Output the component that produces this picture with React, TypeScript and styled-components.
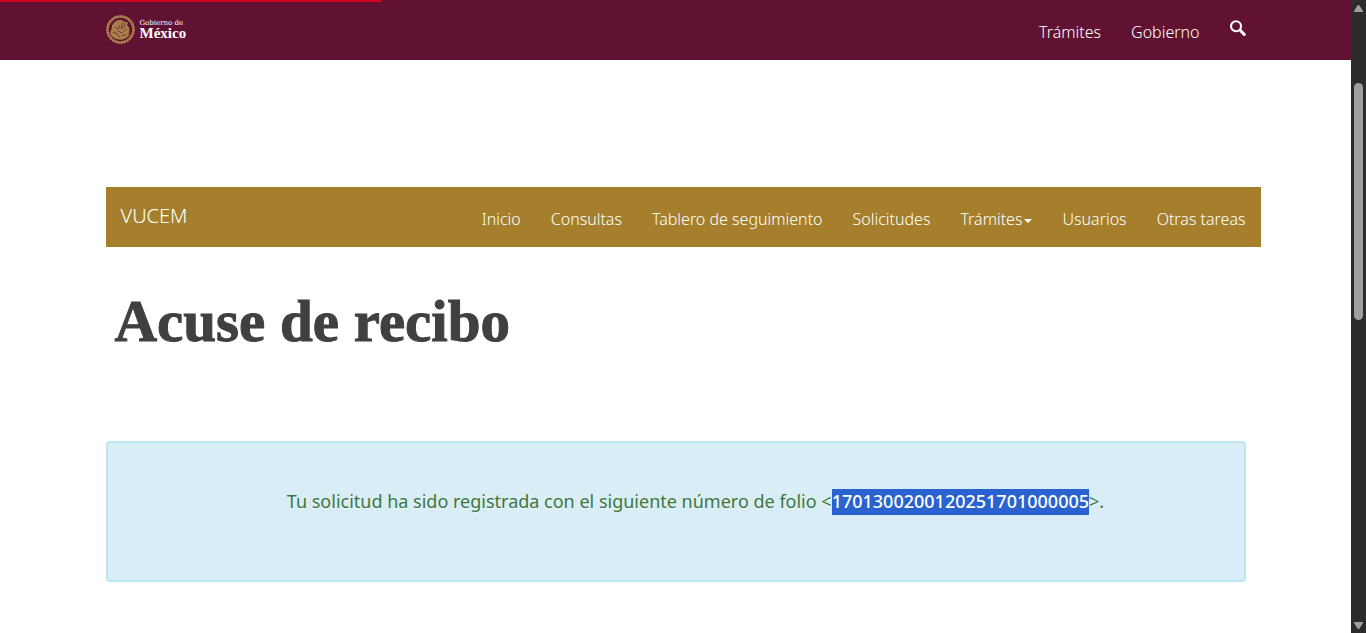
import React from 'react';
import styled, { createGlobalStyle } from 'styled-components';

const GlobalStyle = createGlobalStyle`
  *, *::before, *::after { box-sizing: border-box; }
  body {
    margin: 0;
    background: #fff;
    color: #404041;
    font-family: "Noto Sans", "Open Sans", sans-serif;
    font-size: 18px;
    line-height: 26px;
  }
`;

const Shell = styled.div`
  display: grid;
  grid-template-columns: minmax(0, 1fr) 15px;
  height: 100vh;
  overflow: hidden;
`;

const Page = styled.div`
  overflow: hidden;
`;

const Container = styled.div`
  width: 100%;
  max-width: 1170px;
  margin: 0 auto;
  padding: 0 15px;
`;

const TopBar = styled.header`
  position: relative;
  background: #611232;
`;

const LoadingBar = styled.div`
  position: absolute;
  top: 0;
  left: 0;
  width: 28.3%;
  height: 2px;
  background: #d0021b;
`;

const TopBarInner = styled(Container)`
  display: flex;
  justify-content: space-between;
  height: 60px;
`;

const Brand = styled.a`
  display: flex;
  align-items: center;
  gap: 5px;
  color: #fff;
  text-decoration: none;
`;

const BrandText = styled.span`
  display: flex;
  flex-direction: column;
  padding-bottom: 1px;
  font-family: "Liberation Serif", serif;
  font-weight: 700;
`;

const BrandSmall = styled.span`
  font-family: "DejaVu Serif", serif;
  font-weight: 400;
  font-size: 7px;
  line-height: 7px;
`;

const BrandLarge = styled.span`
  font-size: 15px;
  line-height: 13px;
`;

const TopNav = styled.nav`
  display: flex;
  gap: 30px;
  padding-top: 4px;
`;

const NavLink = styled.a`
  display: flex;
  align-items: center;
  color: #fff;
  font-size: 16px;
  font-weight: 300;
  line-height: 24px;
  text-decoration: none;
  white-space: nowrap;
`;

const SearchButton = styled.button`
  display: flex;
  align-items: center;
  padding: 0 0 9px;
  border: 0;
  background: none;
  color: #fff;
  cursor: pointer;
`;

const SectionBar = styled.nav`
  display: flex;
  justify-content: space-between;
  height: 60px;
  margin: 127px -15px 0 0;
  padding: 0 15px;
  background: #a57f2c;
`;

const SectionTitle = styled.a`
  align-self: center;
  padding-bottom: 2px;
  color: #fff;
  font-size: 20px;
  font-weight: 300;
  line-height: 28px;
  text-decoration: none;
`;

const SectionLinks = styled.div`
  display: flex;
  gap: 30px;
  padding-top: 4px;
`;

const Caret = styled.span`
  margin: 4px 0 0 2px;
  border-top: 4px solid #fff;
  border-left: 4px solid transparent;
  border-right: 4px solid transparent;
`;

const Heading = styled.h1`
  margin: 41px 0 87px;
  padding-left: 9px;
  font-family: "Liberation Serif", serif;
  font-size: 59px;
  font-weight: 700;
  line-height: 66px;
  -webkit-text-stroke: 1px currentColor;
`;

const Alert = styled.div`
  padding: 45px 35px 66px 75px;
  border: 2px solid #bce8f1;
  border-radius: 4px;
  background: #d9edf7;
  color: #3c763d;
  text-align: center;
  text-shadow: 0 1px 0 rgba(255, 255, 255, 0.5);
`;

const Message = styled.p`
  margin: 0;
`;

const Folio = styled.mark`
  padding: 0 0 2px;
  background: #2a63d0;
  color: #fff;
  font-weight: 500;
  text-shadow: none;
`;

const ScrollTrack = styled.div`
  display: flex;
  flex-direction: column;
  align-items: center;
  padding: 5px 0 4px;
  background: #2c2c2c;
`;

const ScrollThumb = styled.div`
  flex: 0 0 38%;
  width: 9px;
  margin: 71px 0 auto;
  border-radius: 5px;
  background: #9f9f9f;
`;

const Seal = () => (
  <svg width="29" height="30" viewBox="0 0 58 60" fill="none" aria-hidden="true">
    <circle cx="29" cy="29" r="26" stroke="#8d5b41" strokeWidth="5" />
    <circle cx="29" cy="29" r="26" stroke="#b08650" strokeWidth="5" strokeDasharray="4 2" />
    <path
      d="M12 21c4-8 11-12 19-11l5 3 8 2-2 5 5 6-1 10-5 8-10 5-11-1-9-6-3-8 3-5z"
      fill="#a97e4b"
    />
    <path
      d="M17 24l8 4 3-8m6-5l-4 12 8-5m-15 9l9 5 9-9M14 35l8 2 5 8m13-5l-8 1M38 17l-2 6"
      stroke="#74403a"
      strokeWidth="2"
    />
    <path d="M11 37c6 13 29 15 36 0" stroke="#b08650" strokeWidth="3" strokeDasharray="5 1" />
  </svg>
);

const SearchIcon = () => (
  <svg width="16" height="16" viewBox="0 0 16 16" fill="none" stroke="#fff" aria-hidden="true">
    <circle cx="6" cy="6.3" r="5" strokeWidth="2.1" />
    <path d="M10.1 10.3l4.1 4.1" strokeWidth="3" strokeLinecap="round" />
  </svg>
);

const Arrow = ({ down = false }: { down?: boolean }) => (
  <svg width="9" height="7" viewBox="0 0 9 7" fill="#9f9f9f" aria-hidden="true">
    <path d={down ? 'M0 0h9v1L5.5 6.5q-1 1-2 0L0 1z' : 'M0 7h9V6L5.5.5q-1-1-2 0L0 6z'} />
  </svg>
);

const sections = [
  { label: 'Inicio' },
  { label: 'Consultas' },
  { label: 'Tablero de seguimiento' },
  { label: 'Solicitudes' },
  { label: 'Trámites', menu: true },
  { label: 'Usuarios' },
  { label: 'Otras tareas' },
];

export default function App() {
  return (
    <Shell>
      <GlobalStyle />
      <Page>
        <TopBar>
          <TopBarInner>
            <Brand href="#">
              <Seal />
              <BrandText>
                <BrandSmall>Gobierno de</BrandSmall>
                <BrandLarge>México</BrandLarge>
              </BrandText>
            </Brand>
            <TopNav>
              <NavLink href="#">Trámites</NavLink>
              <NavLink href="#">Gobierno</NavLink>
              <SearchButton type="button" aria-label="Buscar">
                <SearchIcon />
              </SearchButton>
            </TopNav>
          </TopBarInner>
          <LoadingBar />
        </TopBar>
        <Container as="main">
          <SectionBar>
            <SectionTitle href="#">VUCEM</SectionTitle>
            <SectionLinks>
              {sections.map((s) => (
                <NavLink key={s.label} href="#">
                  {s.label}
                  {s.menu && <Caret />}
                </NavLink>
              ))}
            </SectionLinks>
          </SectionBar>
          <Heading>Acuse de recibo</Heading>
          <Alert role="status">
            <Message>
              Tu solicitud ha sido registrada con el siguiente número de folio &lt;
              <Folio>1701300200120251701000005</Folio>&gt;.
            </Message>
          </Alert>
        </Container>
      </Page>
      <ScrollTrack>
        <Arrow />
        <ScrollThumb />
        <Arrow down />
      </ScrollTrack>
    </Shell>
  );
}
